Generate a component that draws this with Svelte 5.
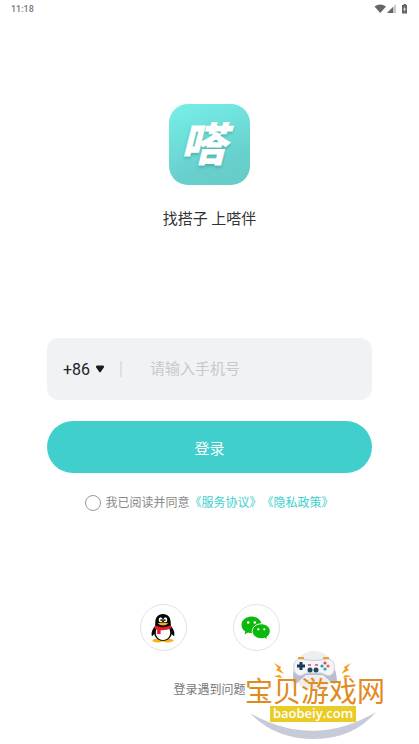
<script>
  let countryCode = $state('+86')
  let phone = $state('')
  let agreed = $state(false)

  function login(event) {
    event.preventDefault()
  }
</script>

<div class="page">
  <header class="status-bar">
    <span>11:18</span>
    <svg class="status-icons" viewBox="0 0 34 12" aria-hidden="true">
      <path d="M0.5 3.4Q6.2-0.6 12 3.4L6.3 10Z" fill="#666" />
      <path d="M22 1V10H13Z" fill="#c9c9c9" />
      <path d="M19 4V10H13Z" fill="#666" />
      <path d="M28 2H29.5V1H32V2H33V10.5H28Z" fill="#666" />
      <path d="M31 3.5L29.2 6.5H30.6L30 9L32 5.8H30.6Z" fill="#fff" />
    </svg>
  </header>

  <main>
    <div class="logo"><span>嗒</span></div>
    <h1>找搭子 上嗒伴</h1>

    <form onsubmit={login}>
      <div class="phone-field">
        <div class="country">
          <select bind:value={countryCode} aria-label="国家区号">
            <option>+86</option>
          </select>
          <svg class="arrow" viewBox="0 0 10 8" aria-hidden="true">
            <path d="M1.8 0.5H8.2Q9.5 1 8.8 2.4L5.7 7Q5 7.9 4.3 7L1.2 2.4Q0.5 1 1.8 0.5Z" fill="#1b1b1b" />
          </svg>
        </div>
        <span class="divider"></span>
        <input type="tel" bind:value={phone} placeholder="请输入手机号" aria-label="手机号" />
      </div>

      <button class="login" type="submit">登录</button>

      <div class="agreement">
        <input id="agree" type="checkbox" bind:checked={agreed} />
        <label for="agree">我已阅读并同意</label>
        <a href="#service">《服务协议》</a>
        <a href="#privacy">《隐私政策》</a>
      </div>
    </form>

    <div class="social">
      <button type="button" aria-label="QQ登录">
        <svg viewBox="0 0 26 30" aria-hidden="true">
          <ellipse cx="8" cy="27.6" rx="5.6" ry="1.8" fill="#f5b414" />
          <ellipse cx="18" cy="27.6" rx="5.6" ry="1.8" fill="#f5b414" />
          <path d="M13 1C7.8 1 5.2 4.7 5.3 9.5L5 13C3 15.4 1.1 19 1.6 22C2 24 3.4 22.4 4.2 20.8C5.3 25.5 8.5 27.8 13 27.8S20.7 25.5 21.8 20.8C22.6 22.4 24 24 24.4 22C24.9 19 23 15.4 21 13L20.7 9.5C20.8 4.7 18.2 1 13 1Z" fill="#050505" />
          <path d="M6.5 16H19.5C21.6 21.5 18.8 27 13 27S4.4 21.5 6.5 16Z" fill="#fff" />
          <ellipse cx="10.6" cy="6.8" rx="1.9" ry="2.5" fill="#fff" />
          <ellipse cx="15.4" cy="6.8" rx="1.9" ry="2.5" fill="#fff" />
          <circle cx="11.2" cy="7.1" r="0.9" fill="#000" />
          <circle cx="14.8" cy="7.1" r="0.9" fill="#000" />
          <path d="M7.5 10.6Q13 8.4 18.5 10.6Q13 14.3 7.5 10.6Z" fill="#f8ae12" />
          <path d="M5.2 12.3Q13 16 20.8 12.3L21.6 15.3Q16 17.7 10.6 17.3V21H7.2V16.8L4.5 15.4Z" fill="#e31b2a" />
        </svg>
      </button>
      <button type="button" aria-label="微信登录">
        <svg class="wechat" viewBox="0 0 30 24" aria-hidden="true">
          <path d="M10.5 0.5C4.9 0.5 0.5 4.2 0.5 8.9C0.5 11.6 2 13.9 4.3 15.4L3.5 18.4L7 16.6Q8.7 17.2 10.5 17.2C16.1 17.2 20.5 13.5 20.5 8.9S16.1 0.5 10.5 0.5Z" fill="#0bb80b" />
          <path d="M20.3 7.8C15.2 7.8 11.2 11.1 11.2 15.3S15.2 22.7 20.3 22.7Q22 22.7 23.5 22.2L26.6 23.7L25.9 21C28 19.6 29.3 17.6 29.3 15.3C29.3 11.1 25.3 7.8 20.3 7.8Z" fill="#0bb80b" stroke="#fff" />
          <g fill="#fff">
            <circle cx="7.2" cy="6.5" r="1.3" />
            <circle cx="13.8" cy="6.5" r="1.3" />
            <circle cx="17.3" cy="13.3" r="1.1" />
            <circle cx="23.3" cy="13.3" r="1.1" />
          </g>
        </svg>
      </button>
    </div>

    <a class="help" href="#help">登录遇到问题</a>
  </main>

  <svg class="watermark" viewBox="0 0 142 92" role="img" aria-label="宝贝游戏网">
    <circle cx="69" cy="23" r="20" fill="#eeeeee" />
    <path d="M5 65Q69 101 131 64Q108 91 69 91T5 65Z" fill="#c7cbd8" />
    <path d="M53 12H84C89 14 92 27 92 33C91 37 87 36 85 33L78 27H61L54 33C51 37 48 36 48 32C48 26 49 15 53 12Z" fill="#b9bdcc" />
    <path d="M54 11Q69 14 84 11C91 12 91 25 86 27C81 29 79 25 76 25H63C59 25 57 29 53 27C47 25 47 12 54 11Z" fill="#f4f5fa" stroke="#cfd2df" />
    <path d="M53 10H59M78 10H84" stroke="#efa02b" stroke-width="2" />
    <path d="M56 14V22M52 18H60" stroke="#183d55" stroke-width="3" />
    <circle cx="65" cy="22" r="2.5" fill="#21485c" />
    <circle cx="71" cy="22" r="2.5" fill="#21485c" />
    <circle cx="80" cy="15" r="1.6" fill="#e3475f" />
    <circle cx="80" cy="21" r="1.6" fill="#25a6a8" />
    <circle cx="77" cy="18" r="1.6" fill="#2999bd" />
    <circle cx="83" cy="18" r="1.6" fill="#ed6440" />
    <path d="M63 17H66M70 17H73" stroke="#e34a68" stroke-width="1.5" />
    <g fill="#f2a01b">
      <path d="M29 15L36 19L35 21L39 26L31 22L33 20Z" />
      <path d="M29 28L35 27L37 30L31 29Z" />
      <path d="M106 15L99 19L100 21L96 26L104 22L102 20Z" />
      <path d="M106 28L100 27L98 30L104 29Z" />
    </g>
    <text x="0" y="54" class="site-name">宝贝游戏网</text>
    <rect x="25" y="58" width="86" height="16" fill="#ebcb25" />
    <text x="68" y="70" text-anchor="middle" class="site-url">baobeiy.com</text>
  </svg>
</div>

<style>
  :global(body) {
    margin: 0;
    background: #fff;
  }

  .page {
    position: relative;
    min-height: 744px;
    font-family: Roboto, 'Noto Sans CJK SC', sans-serif;
    color: #333;
  }

  .status-bar {
    display: flex;
    align-items: center;
    justify-content: space-between;
    height: 18px;
    padding: 0 11px;
    font-size: 9px;
    font-weight: 500;
    color: #777;
  }

  .status-icons {
    width: 34px;
    height: 12px;
  }

  main {
    display: flex;
    flex-direction: column;
    align-items: center;
    padding: 86px 47px 0;
  }

  .logo {
    display: flex;
    align-items: center;
    justify-content: center;
    width: 81px;
    height: 81px;
    padding-right: 12px;
    box-sizing: border-box;
    border-radius: 19px;
    background: linear-gradient(160deg, #76f0e9, #68d0cc 70%, #65cbc6);
    color: #fff;
    font-size: 46px;
    font-weight: 900;
    font-style: italic;
    line-height: 48px;
    text-shadow: 0 2px 3px rgba(30, 130, 130, 0.4);
  }

  h1 {
    margin: 22px 0 0;
    font-size: 15px;
    font-weight: 400;
    line-height: 24px;
  }

  form {
    width: 100%;
    margin-top: 107px;
  }

  .phone-field {
    display: flex;
    align-items: center;
    height: 62px;
    padding: 0 16px;
    box-sizing: border-box;
    border-radius: 12px;
    background: #f1f2f4;
  }

  .country {
    display: flex;
    align-items: center;
    gap: 4px;
  }

  select {
    appearance: none;
    padding: 0;
    border: 0;
    background: none;
    color: #222;
    font-family: inherit;
    font-size: 16px;
  }

  .arrow {
    width: 10px;
    height: 8px;
  }

  .divider {
    width: 2px;
    height: 16px;
    margin: 0 28px 0 15px;
    background: #dfe0e2;
  }

  .phone-field input {
    flex: 1;
    min-width: 0;
    padding: 0;
    border: 0;
    background: none;
    font-family: inherit;
    font-size: 15px;
    line-height: 24px;
  }

  .phone-field input::placeholder {
    color: #c8c9ca;
  }

  .login {
    display: block;
    width: 100%;
    height: 52px;
    margin-top: 21px;
    border: 0;
    border-radius: 26px;
    background: #40cfcd;
    color: #fff;
    font-family: inherit;
    font-size: 15px;
  }

  .agreement {
    display: flex;
    align-items: center;
    justify-content: center;
    margin-top: 20px;
    font-size: 12px;
    line-height: 20px;
    color: #888;
    white-space: nowrap;
  }

  .agreement input {
    appearance: none;
    width: 16px;
    height: 16px;
    margin: 0 4px 0 0;
    border: 1px solid #999;
    border-radius: 50%;
  }

  .agreement input:checked {
    background: #40cfcd;
  }

  a {
    color: #40cfcd;
    text-decoration: none;
  }

  .social {
    display: flex;
    gap: 46px;
    margin-top: 91px;
  }

  .social button {
    display: flex;
    align-items: center;
    justify-content: center;
    width: 47px;
    height: 47px;
    padding: 0;
    border: 1px solid #e2e2e2;
    border-radius: 50%;
    background: #fff;
  }

  .social svg {
    width: 26px;
    height: 30px;
  }

  .social .wechat {
    width: 30px;
    height: 24px;
  }

  .help {
    margin-top: 29px;
    font-size: 12px;
    line-height: 20px;
    color: #777;
  }

  /* site badge sits over the bottom corner */
  .watermark {
    position: absolute;
    right: 32px;
    bottom: 4px;
    width: 142px;
    height: 92px;
    pointer-events: none;
  }

  .site-name {
    font-size: 28px;
    fill: #e08a22;
  }

  .site-url {
    font-family: 'Open Sans', sans-serif;
    font-size: 13px;
    font-weight: 600;
    fill: #fff;
  }
</style>
